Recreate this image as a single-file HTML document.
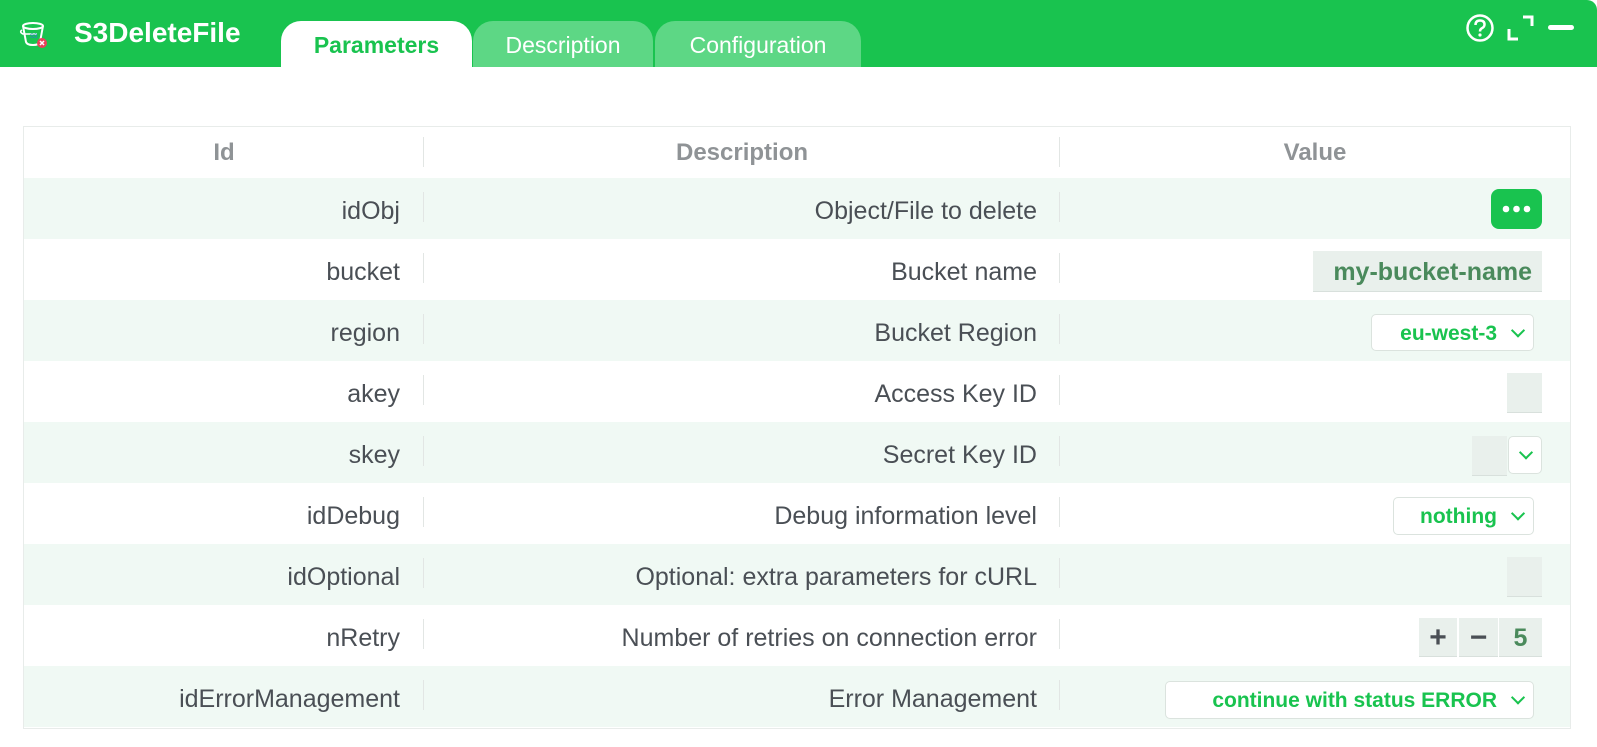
<!DOCTYPE html>
<html><head><meta charset="utf-8"><style>
*{margin:0;padding:0;box-sizing:border-box}
body{width:1597px;height:747px;background:#fff;font-family:"Liberation Sans","DejaVu Sans",sans-serif;position:relative;overflow:hidden}
.hdr{position:absolute;left:0;top:0;width:1597px;height:67px;background:#19c34f;border-top-right-radius:10px}
.title{position:absolute;left:74px;top:17px;color:#fff;font-weight:bold;font-size:28px}
.tab{position:absolute;top:21px;height:46px;border-radius:20px 20px 0 0;font-size:23px;text-align:center;line-height:48px;color:#fff;background:#5dd785}
.tab.on{background:#fff;color:#19c34f;font-weight:bold}
.tbl{position:absolute;left:23px;top:126px;width:1548px;height:603px;border:1px solid #e8ecea}
.row{position:absolute;left:24px;width:1546px;height:61px}
.row.alt{background:#f0f9f4}
.c{position:absolute;top:0;height:100%;display:flex;align-items:center;font-size:25px;color:#4a4f55;white-space:nowrap;padding-top:5px}
.id{right:1170px;justify-content:flex-end}
.ds{right:533px;justify-content:flex-end}
.sep{position:absolute;width:1px;top:14px;height:30px;background:#e2e6e4}
.h .c{color:#8f9396;font-weight:bold;font-size:24px;padding-top:0}
.w{position:absolute}
.box{background:#e9f0ec;border-bottom:1px solid #d8e0dc}
.sel{background:#fff;border:1px solid #dbe3de;border-radius:5px;color:#19c34f;font-weight:bold;font-size:21px;display:flex;align-items:center;justify-content:flex-end;padding-right:36px;padding-top:2px}
.chev{position:absolute;right:10px;top:50%;width:10px;height:10px;border-right:2px solid #19c34f;border-bottom:2px solid #19c34f;transform:translateY(-75%) rotate(45deg)}
</style></head><body>
<div class="hdr">
<svg style="position:absolute;left:19px;top:18px" width="30" height="32" viewBox="0 0 30 32"><path d="M4 8 L7 24 Q8 27 14 27 Q20 27 21 24 L24 8" fill="none" stroke="#fff" stroke-width="2"/><ellipse cx="14" cy="8" rx="10" ry="3" fill="none" stroke="#fff" stroke-width="2"/><path d="M3 12 Q0 14 4 16 L18 16" fill="none" stroke="#fff" stroke-width="1.6"/><text x="11" y="20" font-size="6" fill="#2b7bd6" font-family="Liberation Sans">S3</text><circle cx="23" cy="25" r="5" fill="#e8405a"/><path d="M21 23 L25 27 M25 23 L21 27" stroke="#fff" stroke-width="1.5"/></svg>
<div class="title">S3DeleteFile</div>
<div class="tab on" style="left:281px;width:191px">Parameters</div>
<div class="tab" style="left:473px;width:180px">Description</div>
<div class="tab" style="left:655px;width:206px">Configuration</div>
<svg style="position:absolute;left:1464px;top:13px" width="32" height="32" viewBox="0 0 32 32"><circle cx="16" cy="15" r="12.5" fill="none" stroke="#fff" stroke-width="2.5"/><path d="M11.5 12 Q11.5 7.5 16 7.5 Q20.5 7.5 20.5 11.5 Q20.5 14 17.5 15.5 Q16 16.3 16 18.5" fill="none" stroke="#fff" stroke-width="2.5"/><circle cx="16" cy="22" r="1.6" fill="#fff"/></svg>
<svg style="position:absolute;left:1507px;top:15px" width="28" height="28" viewBox="0 0 28 28"><path d="M2 14 V24 H11 M16 2 H25 V11" fill="none" stroke="#fff" stroke-width="3"/></svg>
<div style="position:absolute;left:1548px;top:25px;width:26px;height:5px;border-radius:3px;background:#fff"></div>
</div>
<div class="tbl"></div>

<div class="row h" style="top:127px;height:51px"><div class="c" style="left:0;width:400px;justify-content:center">Id</div><div class="sep" style="left:399px;top:10px"></div><div class="c" style="left:400px;width:636px;justify-content:center">Description</div><div class="sep" style="left:1035px;top:10px"></div><div class="c" style="left:1036px;width:510px;justify-content:center">Value</div></div>

<div class="row alt" style="top:178px"><div class="c id">idObj</div><div class="sep" style="left:399px"></div><div class="c ds">Object/File to delete</div><div class="sep" style="left:1035px"></div></div>
<div class="row" style="top:239px"><div class="c id">bucket</div><div class="sep" style="left:399px"></div><div class="c ds">Bucket name</div><div class="sep" style="left:1035px"></div></div>
<div class="row alt" style="top:300px"><div class="c id">region</div><div class="sep" style="left:399px"></div><div class="c ds">Bucket Region</div><div class="sep" style="left:1035px"></div></div>
<div class="row" style="top:361px"><div class="c id">akey</div><div class="sep" style="left:399px"></div><div class="c ds">Access Key ID</div><div class="sep" style="left:1035px"></div></div>
<div class="row alt" style="top:422px"><div class="c id">skey</div><div class="sep" style="left:399px"></div><div class="c ds">Secret Key ID</div><div class="sep" style="left:1035px"></div></div>
<div class="row" style="top:483px"><div class="c id">idDebug</div><div class="sep" style="left:399px"></div><div class="c ds">Debug information level</div><div class="sep" style="left:1035px"></div></div>
<div class="row alt" style="top:544px"><div class="c id">idOptional</div><div class="sep" style="left:399px"></div><div class="c ds">Optional: extra parameters for cURL</div><div class="sep" style="left:1035px"></div></div>
<div class="row" style="top:605px"><div class="c id">nRetry</div><div class="sep" style="left:399px"></div><div class="c ds">Number of retries on connection error</div><div class="sep" style="left:1035px"></div></div>
<div class="row alt" style="top:666px"><div class="c id">idErrorManagement</div><div class="sep" style="left:399px"></div><div class="c ds">Error Management</div><div class="sep" style="left:1035px"></div></div>

<div class="w" style="left:1491px;top:189px;width:51px;height:40px;background:#19c34f;border-radius:8px"><svg width="51" height="40" style="display:block"><circle cx="15" cy="20" r="3.3" fill="#fff"/><circle cx="25.5" cy="20" r="3.3" fill="#fff"/><circle cx="36" cy="20" r="3.3" fill="#fff"/></svg></div>
<div class="w box" style="left:1313px;top:251px;width:229px;height:41px;color:#4a8a5c;font-weight:bold;font-size:25px;display:flex;align-items:center;justify-content:flex-end;padding-right:10px;padding-top:2px">my-bucket-name</div>
<div class="w sel" style="left:1371px;top:314px;width:163px;height:37px">eu-west-3<div class="chev"></div></div>
<div class="w box" style="left:1507px;top:373px;width:35px;height:40px"></div>
<div class="w box" style="left:1472px;top:436px;width:35px;height:40px"></div>
<div class="w sel" style="left:1508px;top:436px;width:34px;height:38px;padding:0"><div class="chev"></div></div>
<div class="w sel" style="left:1393px;top:497px;width:141px;height:38px">nothing<div class="chev"></div></div>
<div class="w box" style="left:1507px;top:557px;width:35px;height:40px"></div>
<div class="w box" style="left:1419px;top:618px;width:38px;height:39px;color:#4a4f55;font-size:30px;font-weight:bold;text-align:center;line-height:40px">+</div>
<div class="w box" style="left:1459px;top:618px;width:39px;height:39px;color:#4a4f55;font-size:30px;font-weight:bold;text-align:center;line-height:40px">−</div>
<div class="w box" style="left:1499px;top:618px;width:43px;height:39px;color:#4a8a5c;font-size:25px;font-weight:bold;text-align:center;line-height:40px">5</div>
<div class="w sel" style="left:1165px;top:681px;width:369px;height:38px">continue with status ERROR<div class="chev"></div></div>
</body></html>
